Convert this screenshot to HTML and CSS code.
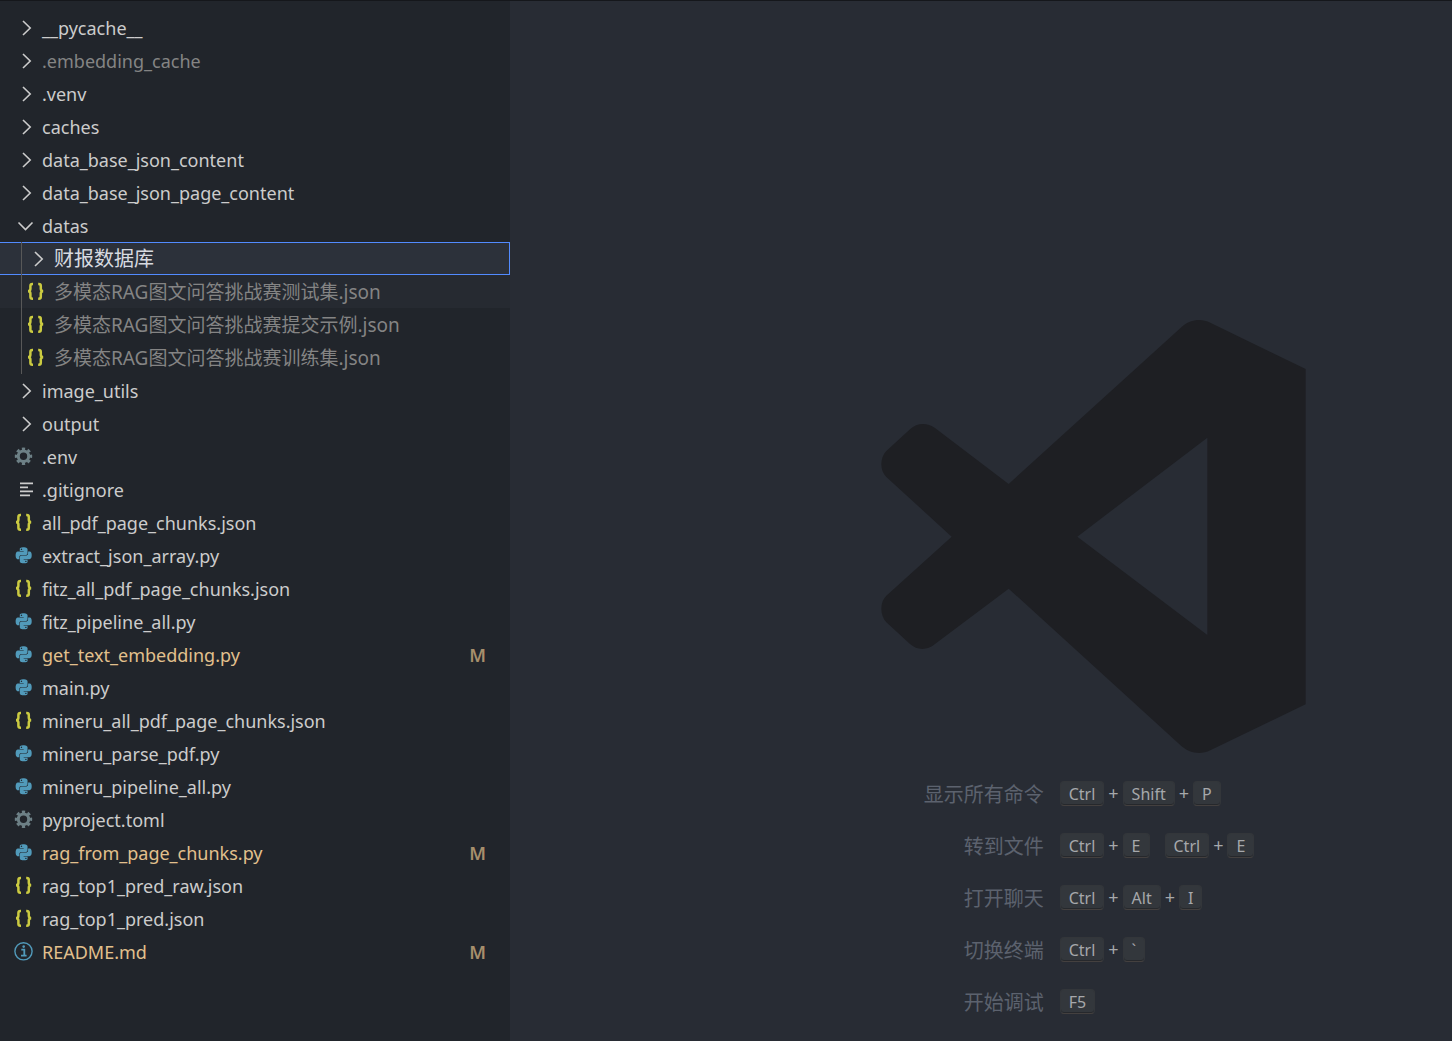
FILE: index.html
```html
<!DOCTYPE html>
<html lang="zh-CN">
<head>
  <meta charset="UTF-8" />
  <meta name="viewport" content="width=device-width, initial-scale=1.0"/>
  <title>Visual Studio Code</title>
  <link rel="stylesheet" href="styles.css">
</head>
<body>
  <svg class="sprite" aria-hidden="true">
    <symbol id="chevron-right" viewBox="0 0 24 24">
      <path d="M11 5l7.2 7-7.2 7" fill="none" stroke="currentColor" stroke-width="1.6"/>
    </symbol>
    <symbol id="chevron-down" viewBox="0 0 24 24">
      <path d="M6.5 8.5l7 7 7-7" fill="none" stroke="currentColor" stroke-width="1.6"/>
    </symbol>
    <symbol id="json" viewBox="0 0 24 24">
      <path d="M9 4H8.4Q6.4 4 6.4 6V8.8Q6.4 11.2 4 11.2Q6.4 11.2 6.4 13.6V16.7Q6.4 18.7 8.4 18.7H9M14.2 4H14.8Q16.8 4 16.8 6V8.8Q16.8 11.2 19.2 11.2Q16.8 11.2 16.8 13.6V16.7Q16.8 18.7 14.8 18.7H14.2" fill="none" stroke="currentColor" stroke-width="2.5"/>
    </symbol>
    <symbol id="python" viewBox="-5.5 -5 36 36">
      <path fill="currentColor" d="M14.25.18l.9.2.73.26.59.3.45.32.34.34.25.34.16.33.1.3.04.26.02.2-.01.13V8.5l-.05.63-.13.55-.21.46-.26.38-.3.31-.33.25-.35.19-.35.14-.33.1-.3.07-.26.04-.21.02H8.77l-.69.05-.59.14-.5.22-.41.27-.33.32-.27.35-.2.36-.15.37-.1.35-.07.32-.04.27-.02.21v3.06H3.17l-.21-.03-.28-.07-.32-.12-.35-.18-.36-.26-.36-.36-.35-.46-.32-.59-.28-.73-.21-.88-.14-1.05-.05-1.23.06-1.22.16-1.04.24-.87.32-.71.36-.57.4-.44.42-.33.42-.24.4-.16.36-.1.32-.05.24-.01h.16l.06.01h8.16v-.83H6.18l-.01-2.75-.02-.37.05-.34.11-.31.17-.28.25-.26.31-.23.38-.2.44-.18.51-.15.58-.12.64-.1.71-.06.77-.04.84-.02 1.27.05zm-6.3 1.98l-.23.33-.08.41.08.41.23.34.33.22.41.09.41-.09.33-.22.23-.34.08-.41-.08-.41-.23-.33-.33-.22-.41-.09-.41.09zm13.09 3.95l.28.06.32.12.35.18.36.27.36.35.35.47.32.59.28.73.21.88.14 1.04.05 1.23-.06 1.23-.16 1.04-.24.86-.32.71-.36.57-.4.45-.42.33-.42.24-.4.16-.36.09-.32.05-.24.02-.16-.01h-8.22v.82h5.84l.01 2.76.02.36-.05.34-.11.31-.17.29-.25.25-.31.24-.38.2-.44.17-.51.15-.58.13-.64.09-.71.07-.77.04-.84.01-1.27-.04-1.07-.14-.9-.2-.73-.25-.59-.3-.45-.33-.34-.34-.25-.34-.16-.33-.1-.3-.04-.25-.02-.2.01-.13v-5.34l.05-.64.13-.54.21-.46.26-.38.3-.32.33-.24.35-.2.35-.14.33-.1.3-.06.26-.04.21-.02.13-.01h5.84l.69-.05.59-.14.5-.21.41-.28.33-.32.27-.35.2-.36.15-.36.1-.35.07-.32.04-.28.02-.21V6.07h2.09l.14.01zm-6.47 14.25l-.23.33-.08.41.08.41.23.33.33.23.41.08.41-.08.33-.23.23-.33.08-.41-.08-.41-.23-.33-.33-.23-.41-.08-.41.08z"/>
    </symbol>
    <symbol id="gear" viewBox="0 0 24 24">
      <g fill="none" stroke="currentColor">
        <circle cx="11.5" cy="11.2" r="5.2" stroke-width="3"/>
        <circle cx="11.5" cy="11.2" r="7.3" stroke-width="2.8" pathLength="16" stroke-dasharray="1.1 0.9" stroke-dashoffset="0.55"/>
      </g>
    </symbol>
    <symbol id="lines" viewBox="0 0 24 24">
      <path d="M8 5.3h13M8 9.3h8M8 13.3h13M8 17.3h10" fill="none" stroke="currentColor" stroke-width="1.8"/>
    </symbol>
    <symbol id="info" viewBox="0 0 24 24">
      <circle cx="11.5" cy="11.3" r="8.6" fill="none" stroke="currentColor" stroke-width="1.4"/>
      <path d="M9.3 9.6h3v6M9 15.6h5.6" fill="none" stroke="currentColor" stroke-width="1.8"/>
      <circle cx="11.7" cy="6.6" r="1.3" fill="currentColor"/>
    </symbol>
  </svg>

  <div class="workbench">
    <nav class="sidebar" aria-label="Explorer">
      <ul class="tree">
        <li><button class="row"><svg class="icon"><use href="#chevron-right"/></svg><span class="name">__pycache__</span></button></li>
        <li><button class="row ignored"><svg class="icon"><use href="#chevron-right"/></svg><span class="name">.embedding_cache</span></button></li>
        <li><button class="row"><svg class="icon"><use href="#chevron-right"/></svg><span class="name">.venv</span></button></li>
        <li><button class="row"><svg class="icon"><use href="#chevron-right"/></svg><span class="name">caches</span></button></li>
        <li><button class="row"><svg class="icon"><use href="#chevron-right"/></svg><span class="name">data_base_json_content</span></button></li>
        <li><button class="row"><svg class="icon"><use href="#chevron-right"/></svg><span class="name">data_base_json_page_content</span></button></li>
        <li>
          <button class="row" aria-expanded="true"><svg class="icon"><use href="#chevron-down"/></svg><span class="name">datas</span></button>
          <ul class="tree children">
            <li><button class="row selected"><svg class="icon"><use href="#chevron-right"/></svg><span class="name">财报数据库</span></button></li>
            <li><a href="#" class="row ignored hovered"><svg class="icon json"><use href="#json"/></svg><span class="name cjk">多模态RAG图文问答挑战赛测试集.json</span></a></li>
            <li><a href="#" class="row ignored"><svg class="icon json"><use href="#json"/></svg><span class="name cjk">多模态RAG图文问答挑战赛提交示例.json</span></a></li>
            <li><a href="#" class="row ignored"><svg class="icon json"><use href="#json"/></svg><span class="name cjk">多模态RAG图文问答挑战赛训练集.json</span></a></li>
          </ul>
        </li>
        <li><button class="row"><svg class="icon"><use href="#chevron-right"/></svg><span class="name">image_utils</span></button></li>
        <li><button class="row"><svg class="icon"><use href="#chevron-right"/></svg><span class="name">output</span></button></li>
        <li><a href="#" class="row"><svg class="icon gear"><use href="#gear"/></svg><span class="name">.env</span></a></li>
        <li><a href="#" class="row"><svg class="icon"><use href="#lines"/></svg><span class="name">.gitignore</span></a></li>
        <li><a href="#" class="row"><svg class="icon json"><use href="#json"/></svg><span class="name">all_pdf_page_chunks.json</span></a></li>
        <li><a href="#" class="row"><svg class="icon python"><use href="#python"/></svg><span class="name">extract_json_array.py</span></a></li>
        <li><a href="#" class="row"><svg class="icon json"><use href="#json"/></svg><span class="name">fitz_all_pdf_page_chunks.json</span></a></li>
        <li><a href="#" class="row"><svg class="icon python"><use href="#python"/></svg><span class="name">fitz_pipeline_all.py</span></a></li>
        <li><a href="#" class="row modified"><svg class="icon python"><use href="#python"/></svg><span class="name">get_text_embedding.py</span><span class="status">M</span></a></li>
        <li><a href="#" class="row"><svg class="icon python"><use href="#python"/></svg><span class="name">main.py</span></a></li>
        <li><a href="#" class="row"><svg class="icon json"><use href="#json"/></svg><span class="name">mineru_all_pdf_page_chunks.json</span></a></li>
        <li><a href="#" class="row"><svg class="icon python"><use href="#python"/></svg><span class="name">mineru_parse_pdf.py</span></a></li>
        <li><a href="#" class="row"><svg class="icon python"><use href="#python"/></svg><span class="name">mineru_pipeline_all.py</span></a></li>
        <li><a href="#" class="row"><svg class="icon gear"><use href="#gear"/></svg><span class="name">pyproject.toml</span></a></li>
        <li><a href="#" class="row modified"><svg class="icon python"><use href="#python"/></svg><span class="name">rag_from_page_chunks.py</span><span class="status">M</span></a></li>
        <li><a href="#" class="row"><svg class="icon json"><use href="#json"/></svg><span class="name">rag_top1_pred_raw.json</span></a></li>
        <li><a href="#" class="row"><svg class="icon json"><use href="#json"/></svg><span class="name">rag_top1_pred.json</span></a></li>
        <li><a href="#" class="row modified"><svg class="icon info"><use href="#info"/></svg><span class="name">README.md</span><span class="status">M</span></a></li>
      </ul>
    </nav>

    <main class="editor">
      <svg class="logo" viewBox="34 30 1275 1299" aria-hidden="true">
        <path fill="currentColor" fill-rule="evenodd" d="M1308 177V1183L1022 1321C993 1335 960 1330 935 1308L417 836L196 1002C172 1022 142 1021 121 1002L50 937C30 916 30 876 50 857L246 680L50 501C30 482 30 444 50 423L121 358C142 338 172 337 196 354L417 522L935 52C960 29 993 24 1022 38ZM623 680L1013 975V383Z"/>
      </svg>

      <dl class="shortcuts">
        <dt>显示所有命令</dt>
        <dd><span class="keys"><kbd>Ctrl</kbd>+<kbd>Shift</kbd>+<kbd>P</kbd></span></dd>
        <dt>转到文件</dt>
        <dd><span class="keys"><kbd>Ctrl</kbd>+<kbd>E</kbd></span><span class="keys"><kbd>Ctrl</kbd>+<kbd>E</kbd></span></dd>
        <dt>打开聊天</dt>
        <dd><span class="keys"><kbd>Ctrl</kbd>+<kbd>Alt</kbd>+<kbd>I</kbd></span></dd>
        <dt>切换终端</dt>
        <dd><span class="keys"><kbd>Ctrl</kbd>+<kbd>`</kbd></span></dd>
        <dt>开始调试</dt>
        <dd><span class="keys"><kbd>F5</kbd></span></dd>
      </dl>
    </main>
  </div>
</body>
</html>
```
FILE: styles.css
```css
* {
  box-sizing: border-box;
}

body {
  margin: 0;
  background: #282c34;
  color: #cccccc;
  font-family: "Noto Sans", "Noto Sans CJK SC", sans-serif;
  font-size: 18px;
}

.sprite {
  display: none;
}

.workbench {
  display: flex;
  min-height: 100vh;
  border-top: 1px solid #15171b;
}

/* Explorer */
.sidebar {
  flex: 0 0 510px;
  padding-top: 10px;
  background: #21252b;
}

.tree {
  list-style: none;
  margin: 0;
  padding: 0;
}

.row {
  display: flex;
  align-items: center;
  gap: 6px;
  width: 100%;
  height: 33px;
  padding: 0 24px 0 12px;
  border: 0;
  background: none;
  color: #cccccc;
  font: inherit;
  line-height: 24px;
  text-align: left;
  text-decoration: none;
  white-space: nowrap;
}

.icon {
  flex: none;
  width: 24px;
  height: 24px;
  color: #cccccc;
}

.icon.json { color: #cbcb41; }
.icon.python { color: #519aba; }
.icon.gear { color: #6d8086; }
.icon.info { color: #519aba; }

.name {
  flex: 1;
}

.cjk {
  font-size: 19px;
}

.status {
  color: #a78f6c;
  font-weight: 600;
}

.ignored .name { color: #848484; }
.modified .name { color: #e2c08d; }

.hovered {
  background: #262a31;
}

.selected {
  border: 1px solid #528bff;
  border-left: 0;
  background: #2c313a;
}

.selected .name {
  color: #d7dae0;
  font-size: 20px;
}

.children {
  position: relative;
}

.children .row {
  padding-left: 24px;
}

/* indent guide */
.children::before {
  content: "";
  position: absolute;
  top: 0;
  bottom: 0;
  left: 21px;
  width: 1px;
  background: #585858;
}

/* Empty editor */
.editor {
  flex: 1;
  display: flex;
  flex-direction: column;
  align-items: center;
  justify-content: flex-end;
  padding: 0 0 14px 224px;
}

.logo {
  width: 425px;
  height: 433px;
  color: #1e1f23;
}

.shortcuts {
  display: grid;
  grid-template-columns: auto auto;
  grid-auto-rows: 52px;
  align-items: center;
  column-gap: 16px;
  margin: 14px 0 0;
  padding-right: 8px;
}

.shortcuts dt {
  color: #5c626e;
  font-size: 20px;
  text-align: right;
}

.shortcuts dd {
  display: flex;
  gap: 15px;
  margin: 0;
}

.keys {
  display: flex;
  align-items: center;
  gap: 4px;
  color: #a6a8ab;
  font-size: 18px;
}

kbd {
  height: 25px;
  padding: 0 8px;
  border: 1px solid #33363a;
  border-bottom-color: #44403f;
  border-radius: 4px;
  background: #33373c;
  box-shadow: inset 0 -1px 0 #26282c;
  font-family: inherit;
  font-size: 16px;
  line-height: 24px;
}
```
